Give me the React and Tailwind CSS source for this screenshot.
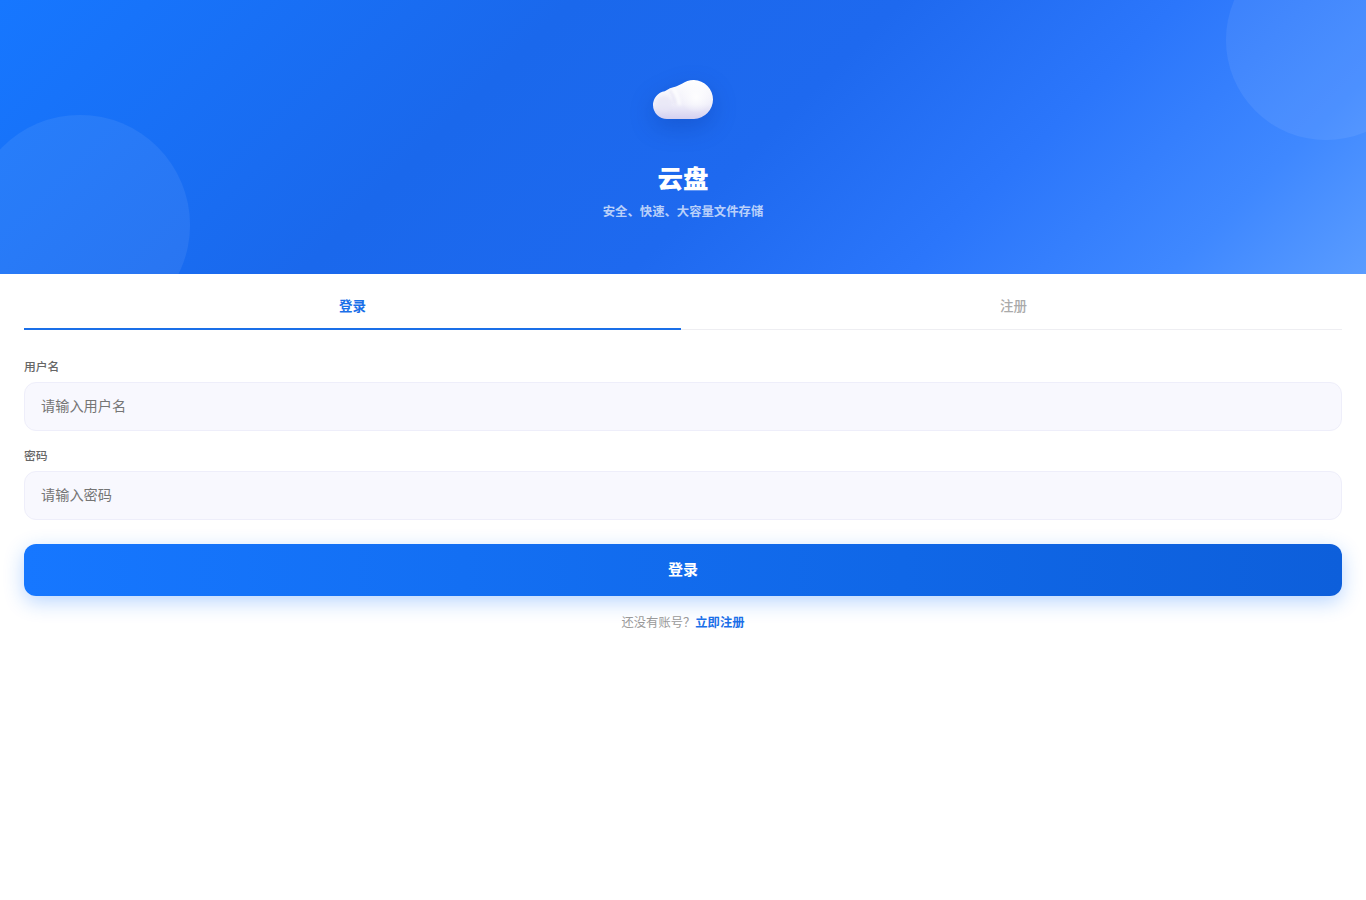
const cjk = "font-['Inter','Noto_Sans_CJK_SC',sans-serif]";

function Cloud() {
  return (
    <svg width="60" height="39" viewBox="0 0 60 39" className="drop-shadow-[0_8px_12px_rgba(0,30,120,0.22)]">
      <defs>
        <linearGradient id="body" x1="0.5" y1="0" x2="0.5" y2="1">
          <stop offset="0" stopColor="#ffffff" />
          <stop offset="0.62" stopColor="#f0effa" />
          <stop offset="1" stopColor="#d4d0f0" />
        </linearGradient>
        <radialGradient id="glow" cx="0.5" cy="0.5" r="0.5">
          <stop offset="0" stopColor="#ffffff" stopOpacity="0.9" />
          <stop offset="1" stopColor="#ffffff" stopOpacity="0" />
        </radialGradient>
        <filter id="soft" x="-50%" y="-50%" width="200%" height="200%">
          <feGaussianBlur stdDeviation="1.6" />
        </filter>
        <clipPath id="shape">
          <circle cx="14" cy="25" r="14" />
          <circle cx="40.5" cy="19.5" r="19.5" />
          <path d="M11.7 11.2L17 8.3L23 6.6L30 3.3L41 0V39H14V20Z" />
        </clipPath>
      </defs>
      <g clipPath="url(#shape)">
        <rect width="60" height="39" fill="url(#body)" />
        <circle cx="11" cy="24" r="8" fill="#e6e4f5" opacity="0.6" filter="url(#soft)" />
        <circle cx="43" cy="17" r="16" fill="url(#glow)" />
        <path d="M17 10C20 14 22 18 22.5 24" stroke="#d8d5ec" strokeWidth="1.4" fill="none" filter="url(#soft)" opacity="0.7" />
        <path d="M20 9C23.5 14 26 18 26.5 25" stroke="#ffffff" strokeWidth="2.5" fill="none" filter="url(#soft)" />
      </g>
    </svg>
  );
}

export default function App() {
  return (
    <div className={`min-h-[900px] bg-white ${cjk}`}>
      <header className="relative h-[274px] overflow-hidden bg-[linear-gradient(135deg,#1677ff_0%,#1a68ec_35%,#1e69ef_55%,#2b76fb_72%,#3f88ff_88%,#5a9cff_100%)] flex flex-col items-center pt-[80px]">
        <div className="absolute -top-[60px] -right-[60px] w-[200px] h-[200px] rounded-full bg-white/[0.07]" />
        <div className="absolute -bottom-[61px] -left-[30px] w-[220px] h-[220px] rounded-full bg-white/[0.07]" />
        <Cloud />
        <h1 className="relative mt-[43px] text-[25.5px] leading-[34px] font-black text-white">云盘</h1>
        <p className="relative mt-[8px] text-[12.35px] leading-[16px] font-semibold text-white/70">安全、快速、大容量文件存储</p>
      </header>

      <main className="px-6">
        <div className="flex gap-1 border-b border-[#eeeef2] h-[56px]">
          <button className="flex-1 h-[56px] pt-[10px] border-b-2 border-[#1a6fe8] text-[13.5px] font-bold text-[#1a6fe8]">登录</button>
          <button className="flex-1 h-[56px] pt-[8px] text-[13.5px] font-medium text-[#aaaaaa]">注册</button>
        </div>

        <form className="pt-[29px]">
          <label className="block text-[11.8px] leading-[16px] font-medium text-[#666666] mb-[7px]">用户名</label>
          <input placeholder="请输入用户名" className="block w-full h-[49px] rounded-xl border border-[#eeeefa] bg-[#f8f8fe] pl-[16px] pr-[17px] pb-[3px] text-[14.2px] placeholder:text-[#757575]" />
          <label className="block mt-[17px] text-[11.8px] leading-[16px] font-medium text-[#666666] mb-[7px]">密码</label>
          <input placeholder="请输入密码" className="block w-full h-[49px] rounded-xl border border-[#eeeefa] bg-[#f8f8fe] pl-[16px] pr-[17px] pb-[3px] text-[14.2px] placeholder:text-[#757575]" />
          <button type="button" className="mt-6 block w-full h-[52px] rounded-xl bg-[linear-gradient(90deg,#1677ff,#0d5fdb)] text-[15px] font-bold text-white shadow-[0_6px_20px_rgba(22,119,255,0.3)]">登录</button>
        </form>

        <p className="mt-[19px] text-center text-[12.3px] leading-[16px] text-[#999999]">
          还没有账号？<span className="font-bold text-[#1a6fe8]">立即注册</span>
        </p>
      </main>
    </div>
  );
}
